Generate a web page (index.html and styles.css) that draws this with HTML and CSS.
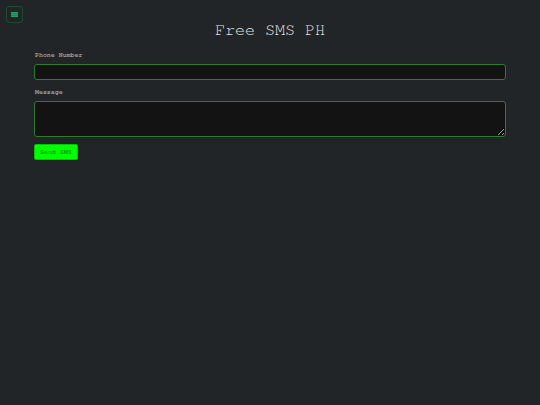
FILE: index.html
```html
<!DOCTYPE html>
<html>
<head>
<meta charset="utf-8">
<link rel="stylesheet" href="styles.css">
</head>
<body>
<button class="menu-btn" aria-label="Menu">
  <svg width="7" height="5" viewBox="0 0 7 5"><rect x="0" y="0" width="7" height="5" fill="#2a9d62"/><rect x="0" y="1.6" width="7" height="0.5" fill="#1d6e45"/><rect x="0" y="3" width="7" height="0.5" fill="#1d6e45"/></svg>
</button>
<main class="page">
  <h1 class="title">Free SMS PH</h1>
  <form class="sms-form">
    <div class="field">
      <label class="label">Phone Number</label>
      <input class="input" type="text">
    </div>
    <div class="field">
      <label class="label">Message</label>
      <textarea class="input textarea"></textarea>
    </div>
    <button class="send-btn" type="button">Send SMS</button>
  </form>
</main>
</body>
</html>
```
FILE: styles.css
```css
html, body {
  margin: 0;
  padding: 0;
  background: #222528;
  height: 100%;
}
body {
  font-family: "FreeMono", "Liberation Mono", monospace;
  color: #cfcfcf;
}
.menu-btn {
  position: absolute;
  left: 6px;
  top: 6px;
  width: 17px;
  height: 17px;
  padding: 0;
  border: 1px solid #1f4b36;
  border-radius: 3px;
  background: #222528;
  display: flex;
  align-items: center;
  justify-content: center;
}
.page {
  padding: 0 34px;
}
.title {
  margin: 0;
  padding-top: 20px;
  height: 31px;
  font-size: 16.7px;
  line-height: 20px;
  font-weight: normal;
  text-align: center;
  color: #e2e2e2;
}
.sms-form {
  display: flex;
  flex-direction: column;
  gap: 8px;
}
.field {
  display: flex;
  flex-direction: column;
  gap: 5px;
}
.label {
  font-size: 6.6px;
  line-height: 8px;
  font-weight: bold;
  color: #9c9c9c;
  padding-left: 1px;
}
.input {
  box-sizing: border-box;
  width: 100%;
  height: 16px;
  margin: 0;
  background: #131313;
  border: 1px solid #2e7a30;
  border-radius: 3px;
  color: #d0d0d0;
  font-family: inherit;
  font-size: 7px;
  outline: none;
}
.textarea {
  height: 36px;
  resize: vertical;
  display: block;
}
.send-btn {
  align-self: flex-start;
  margin-top: -1px;
  height: 16px;
  padding: 0 5px;
  background: #00ff00;
  border: 1px solid #00c800;
  border-radius: 2px;
  color: #12a012;
  font-family: inherit;
  font-size: 6.6px;
  font-weight: bold;
  line-height: 14px;
}
```
